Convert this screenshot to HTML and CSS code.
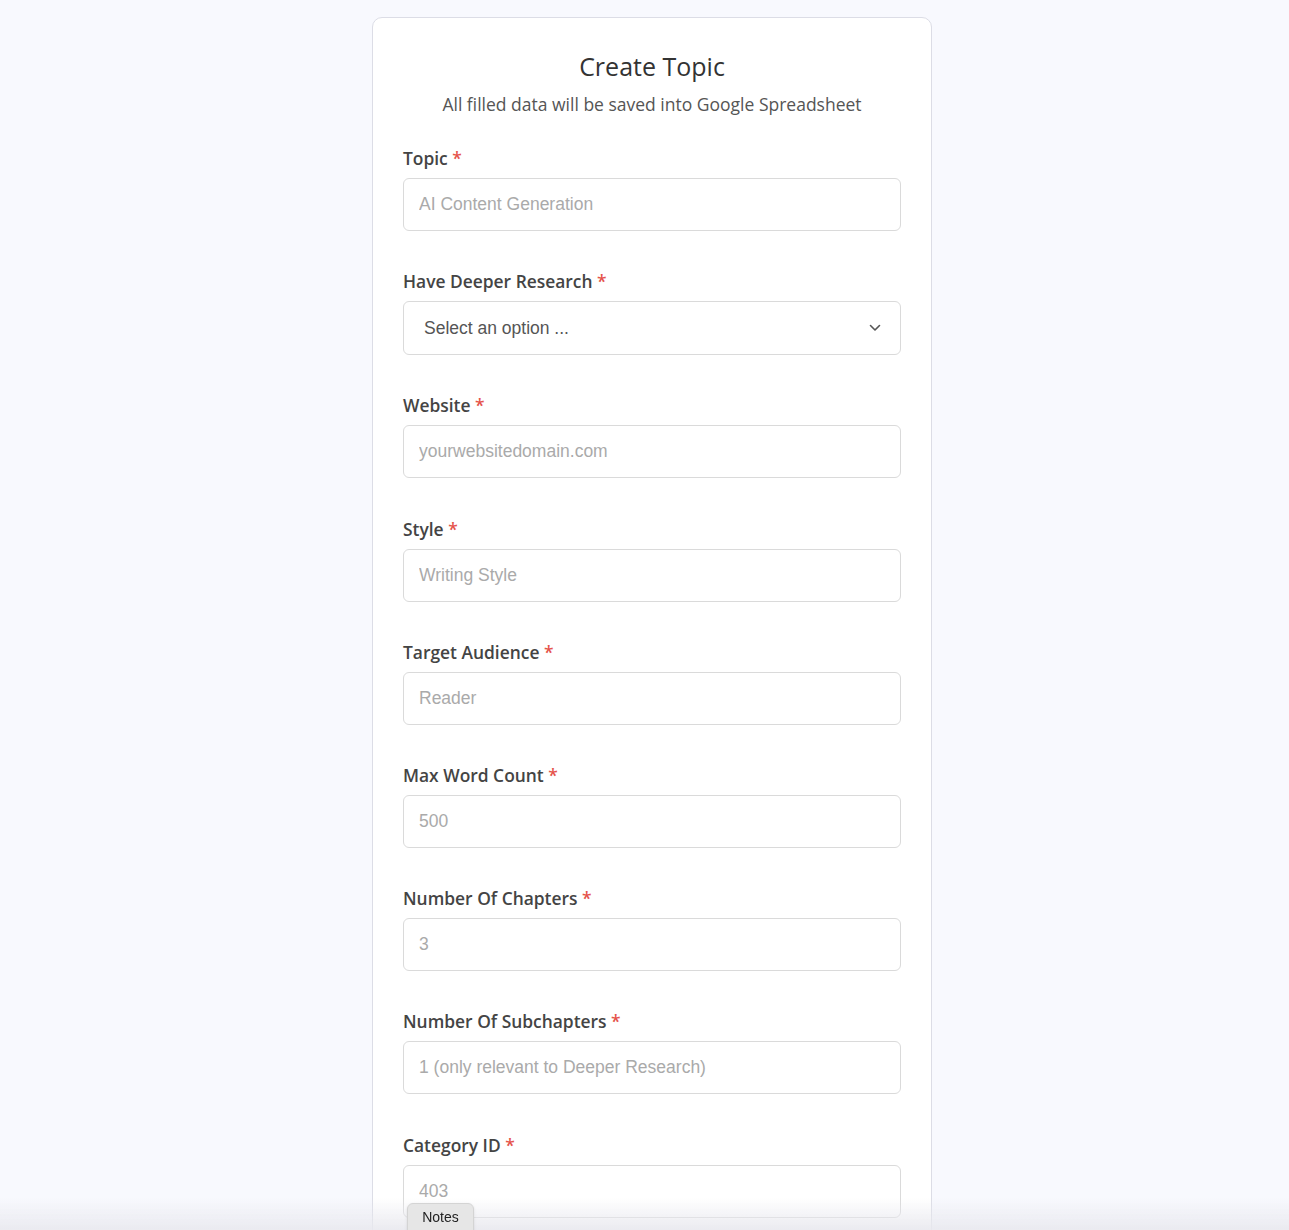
FILE: index.html
```html
<!DOCTYPE html>
<html lang="en">
<head>
  <meta charset="UTF-8">
  <title>Create Topic</title>
  <link rel="stylesheet" href="styles.css">
</head>
<body>

  <div class="form-card">
    <h1>Create Topic</h1>
    <p class="subtitle">All filled data will be saved into Google Spreadsheet</p>

    <form id="topic-form">
      <div class="field">
        <label for="topic">Topic <span class="req">*</span></label>
        <input type="text" id="topic" placeholder="AI Content Generation">
      </div>

      <div class="field">
        <label for="deeper">Have Deeper Research <span class="req">*</span></label>
        <div class="select-wrap">
          <select id="deeper">
            <option>Select an option ...</option>
            <option>Yes</option>
            <option>No</option>
          </select>
          <svg class="chevron" width="12" height="8" viewBox="0 0 12 8"><path d="M1.5 1.5 6 6l4.5-4.5" fill="none" stroke="#555" stroke-width="1.6" stroke-linecap="round" stroke-linejoin="round"/></svg>
        </div>
      </div>

      <div class="field">
        <label for="website">Website <span class="req">*</span></label>
        <input type="text" id="website" placeholder="yourwebsitedomain.com">
      </div>

      <div class="field">
        <label for="style">Style <span class="req">*</span></label>
        <input type="text" id="style" placeholder="Writing Style">
      </div>

      <div class="field">
        <label for="audience">Target Audience <span class="req">*</span></label>
        <input type="text" id="audience" placeholder="Reader">
      </div>

      <div class="field">
        <label for="words">Max Word Count <span class="req">*</span></label>
        <input type="text" id="words" placeholder="500">
      </div>

      <div class="field">
        <label for="chapters">Number Of Chapters <span class="req">*</span></label>
        <input type="text" id="chapters" placeholder="3">
      </div>

      <div class="field">
        <label for="subchapters">Number Of Subchapters <span class="req">*</span></label>
        <input type="text" id="subchapters" placeholder="1 (only relevant to Deeper Research)">
      </div>

      <div class="field">
        <label for="category">Category ID <span class="req">*</span></label>
        <input type="text" id="category" placeholder="403">
      </div>
    </form>
  </div>

  <div class="bottom-shade"></div>
  <button class="notes-tab" type="button">Notes</button>

</body>
</html>
```

FILE: styles.css
```css
body {
  margin: 0;
  padding: 17px 0 40px 15px;
  background-color: #f8f9fe;
  color: #333;
  font-family: "Open Sans", Arial, sans-serif;
}

.form-card {
  width: 498px;
  margin: 0 auto;
  padding: 30px 30px 20px;
  background-color: #fff;
  border: 1px solid #dcdde6;
  border-radius: 10px;
}

h1 {
  margin: 0;
  font-size: 25px;
  line-height: 36px;
  font-weight: 400;
  text-align: center;
  color: #333;
}

.subtitle {
  margin: 8px 0 31px;
  font-size: 17.5px;
  line-height: 24px;
  text-align: center;
  color: #555;
}

.field {
  margin-bottom: 39.2px;
}

label {
  display: block;
  margin-bottom: 9px;
  font-size: 17.4px;
  line-height: 22px;
  font-weight: 600;
  color: #444;
}

.req {
  color: #e5534b;
}

input[type="text"], select {
  display: block;
  box-sizing: border-box;
  width: 100%;
  height: 53px;
  padding: 0 15px;
  border: 1px solid #dadada;
  border-radius: 6px;
  background-color: #fff;
  font-family: "Liberation Sans", Arial, sans-serif;
  font-size: 17.5px;
  color: #333;
  outline: none;
}

input::placeholder {
  color: #aaa;
}

.select-wrap {
  position: relative;
}

select {
  height: 54px;
  padding-left: 20px;
  color: #555;
  appearance: none;
  -webkit-appearance: none;
}

.chevron {
  position: absolute;
  right: 20px;
  top: 23px;
  pointer-events: none;
}

.bottom-shade {
  position: fixed;
  left: 0;
  right: 0;
  bottom: 0;
  height: 32px;
  background: linear-gradient(to bottom, rgba(235, 235, 240, 0), rgba(232, 232, 238, 0.9));
  pointer-events: none;
}

.notes-tab {
  position: fixed;
  left: 407px;
  bottom: -6px;
  width: 67px;
  height: 33px;
  padding: 0 0 6px;
  border: 1px solid #d4d4d4;
  border-radius: 6px;
  background-color: #e6e6e6;
  font-family: "Liberation Sans", Arial, sans-serif;
  font-size: 14px;
  color: #222;
  box-shadow: 0 1px 3px rgba(0, 0, 0, 0.1);
}
```
